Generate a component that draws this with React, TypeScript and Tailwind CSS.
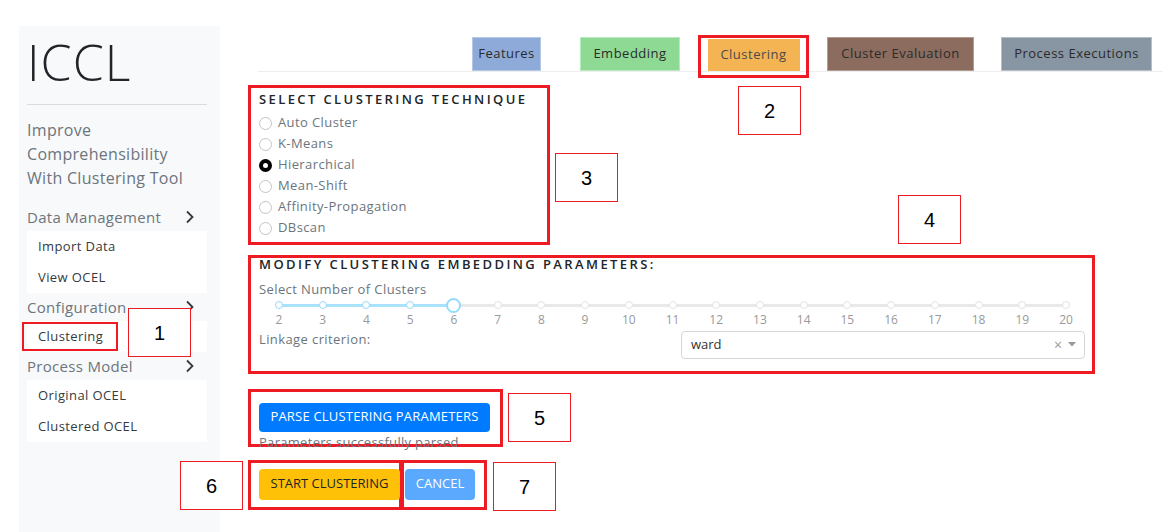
import React from "react";

const FONT = { fontFamily: "'Open Sans', 'Noto Sans', sans-serif" };

const techniques = ["Auto Cluster", "K-Means", "Hierarchical", "Mean-Shift", "Affinity-Propagation", "DBscan"];
const marks = Array.from({ length: 19 }, (_, i) => i + 2);
const selectedClusters = 6;

function Chevron() {
  return (
    <svg width="10" height="14" viewBox="0 0 10 14" className="text-[#343a40]">
      <path d="M2 1.5 L7.5 7 L2 12.5" fill="none" stroke="currentColor" strokeWidth="1.8" />
    </svg>
  );
}

function NavGroup({ title, items, marked }: { title: string; items: string[]; marked?: string }) {
  return (
    <div>
      <div className="flex h-[28px] items-center justify-between pr-[25px] text-[15px] tracking-[0.3px] text-[#6c757d]">
        <span>{title}</span>
        <Chevron />
      </div>
      <div className="w-[180px] bg-white">
        {items.map((it) => (
          <div key={it} className="flex h-[31px] items-center pl-[11px] text-[13px] tracking-[0.4px] text-[#343a40]">
            {it === marked ? (
              <span className="-ml-[16px] border-2 border-[#ed1c24] py-[3px] pl-[14px] pr-[13px]">{it}</span>
            ) : (
              it
            )}
          </div>
        ))}
      </div>
    </div>
  );
}

function Tab({ label, bg, cls }: { label: string; bg: string; cls: string }) {
  return (
    <div className={`flex items-center justify-center text-[13px] tracking-[0.5px] text-[#2b2b2b] ${bg} ${cls}`}>{label}</div>
  );
}

function Note({ n, cls }: { n: string; cls: string }) {
  return (
    <div
      className={`absolute flex h-[49px] w-[63px] items-center justify-center border border-[#ed1c24] bg-white text-[20px] text-black ${cls}`}
      style={{ fontFamily: "'Liberation Sans', Arial, sans-serif" }}
    >
      {n}
    </div>
  );
}

function Slider() {
  const left = 20;
  const width = 787;
  const step = width / 18;
  const handleX = left + (selectedClusters - 2) * step;
  return (
    <div className="relative h-[33px] w-[826px]">
      <div className="absolute top-[6px] h-[3px] rounded bg-[#e9e9e9]" style={{ left, width }} />
      <div className="absolute top-[6px] h-[3px] rounded bg-[#abe2fb]" style={{ left, width: handleX - left }} />
      {marks.map((m, i) => {
        const x = left + i * step;
        const active = m <= selectedClusters;
        return (
          <React.Fragment key={m}>
            {m === selectedClusters ? (
              <div
                className="absolute top-0 h-[15px] w-[15px] rounded-full border-2 border-[#96dbfa] bg-white"
                style={{ left: x - 7.5 }}
              />
            ) : (
              <div
                className={`absolute top-[3.5px] h-[8px] w-[8px] rounded-full border bg-white ${active ? "border-[#96dbfa]" : "border-[#e3e3e3]"}`}
                style={{ left: x - 4 }}
              />
            )}
            <div className="absolute top-[15px] w-[30px] text-center text-[12px] leading-[14px] text-[#999]" style={{ left: x - 15 }}>
              {m}
            </div>
          </React.Fragment>
        );
      })}
    </div>
  );
}

export default function App() {
  return (
    <div className="relative h-[532px] w-[1166px] overflow-hidden bg-white" style={FONT}>
      <div className="flex h-full">
        {/* sidebar */}
        <div className="ml-[19px] mt-[26px] w-[201px] bg-[#f8f9fa] pl-[8px]">
          <div className="pt-[6px] text-[50px] font-light leading-[60px] tracking-[1px] text-[#212529]">ICCL</div>
          <div className="mt-[12px] h-px w-[180px] bg-[#dcdcdc]" />
          <div className="mt-[13px] text-[16px] leading-[24px] tracking-[0.3px] text-[#6c757d]">
            <div>Improve</div>
            <div>Comprehensibility</div>
            <div>With Clustering Tool</div>
          </div>
          <div className="mt-[13px]">
            <NavGroup title="Data Management" items={["Import Data", "View OCEL"]} />
            <NavGroup title="Configuration" items={["Clustering"]} marked="Clustering" />
            <NavGroup title="Process Model" items={["Original OCEL", "Clustered OCEL"]} />
          </div>
        </div>

        {/* main */}
        <div className="flex-1 pl-[28px]">
          <div className="ml-[10px] mt-[35px] flex h-[43px] w-[905px] items-start">
            <div className="relative flex h-[37px] w-full items-end border-b border-[#eeeeee]">
              <Tab label="Features" bg="bg-[#8eaad9]" cls="ml-[214px] h-[34px] w-[69px] border border-[#b5c8e8]" />
              <Tab label="Embedding" bg="bg-[#8ed994]" cls="ml-[39px] h-[34px] w-[100px] border border-[#b9eabd]" />
              <div className="ml-[18px] flex h-[43px] w-[111px] items-start justify-center self-start border-[3px] border-[#ed1c24] pt-[1px]">
                <Tab label="Clustering" bg="bg-[#f5b453]" cls="h-[32px] w-[92px] !text-[#4a4a4a]" />
              </div>
              <Tab label="Cluster Evaluation" bg="bg-[#8c6c5e]" cls="ml-[18px] h-[34px] w-[147px] border border-[#b19d94]" />
              <Tab label="Process Executions" bg="bg-[#8895a2]" cls="ml-[27px] h-[34px] w-[151px] border border-[#b6bec7]" />
            </div>
          </div>

          {/* technique */}
          <div className="mt-[7px] w-[302px] border-[3px] border-[#ed1c24] pb-[3px] pl-[8px] pt-[2px]">
            <div className="text-[13px] font-semibold tracking-[2.4px] text-[#212529]">SELECT CLUSTERING TECHNIQUE</div>
            <div className="mt-[3px]">
              {techniques.map((t) => (
                <div key={t} className="flex h-[21px] items-center gap-[6px] text-[13px] tracking-[0.4px] text-[#6c757d]">
                  {t === "Hierarchical" ? (
                    <span className="h-[13px] w-[13px] rounded-full border-[4px] border-black bg-white" />
                  ) : (
                    <span className="h-[13px] w-[13px] rounded-full border border-[#c4c4c4] bg-white" />
                  )}
                  <span>{t}</span>
                </div>
              ))}
            </div>
          </div>

          {/* parameters */}
          <div className="mt-[10px] w-[847px] border-[3px] border-[#ed1c24] pb-[12px] pl-[8px]">
            <div className="-mt-[2px] text-[13px] font-semibold leading-[16px] tracking-[2.4px] text-[#212529]">MODIFY CLUSTERING EMBEDDING PARAMETERS:</div>
            <div className="mt-[8px] text-[13px] leading-[18px] tracking-[0.4px] text-[#6c757d]">Select Number of Clusters</div>
            <Slider />
            <div className="flex items-start justify-between pr-[7px]">
              <div className="mt-[-1px] text-[13px] leading-[18px] tracking-[0.4px] text-[#6c757d]">Linkage criterion:</div>
              <div className="flex h-[28px] w-[404px] items-center justify-between rounded-[4px] border border-[#d6d6d6] bg-white pl-[9px] pr-[8px] text-[13px] text-[#333]">
                <span>ward</span>
                <span className="flex items-center gap-[6px] text-[#999]">
                  <span className="text-[14px]">×</span>
                  <svg width="8" height="5" viewBox="0 0 8 5">
                    <path d="M0 0 L8 0 L4 4.5 Z" fill="#999" />
                  </svg>
                </span>
              </div>
            </div>
          </div>

          {/* parse */}
          <div className="mt-[15px] h-[58px] w-[255px] border-[3px] border-[#ed1c24] pl-[8px] pt-[11px]">
            <button className="flex h-[29px] w-[231px] items-center justify-center rounded-[4px] bg-[#007bff] text-[13px] tracking-[0.2px] text-white">
              PARSE CLUSTERING PARAMETERS
            </button>
            <div className="mt-[2px] text-[13px] leading-[16px] tracking-[0.3px] text-[#6c757d]">Parameters successfully parsed</div>
          </div>

          {/* actions */}
          <div className="mt-[13px] flex">
            <div className="h-[50px] w-[154px] border-[3px] border-[#ed1c24] pl-[8px] pt-[6px]">
              <button className="flex h-[31px] w-[141px] items-center justify-center rounded-[4px] bg-[#ffc107] text-[13px] text-[#212529]">
                START CLUSTERING
              </button>
            </div>
            <div className="-ml-[1px] h-[50px] w-[86px] border-[3px] border-[#ed1c24] pl-[1px] pt-[6px]">
              <button className="flex h-[31px] w-[70px] items-center justify-center rounded-[4px] bg-[#5aa9ff] text-[13px] text-white">
                CANCEL
              </button>
            </div>
          </div>
        </div>
      </div>

      <Note n="1" cls="left-[128px] top-[308px]" />
      <Note n="2" cls="left-[738px] top-[86px]" />
      <Note n="3" cls="left-[555px] top-[153px]" />
      <Note n="4" cls="left-[898px] top-[195px]" />
      <Note n="5" cls="left-[508px] top-[393px]" />
      <Note n="6" cls="left-[180px] top-[461px]" />
      <Note n="7" cls="left-[493px] top-[462px]" />
    </div>
  );
}
